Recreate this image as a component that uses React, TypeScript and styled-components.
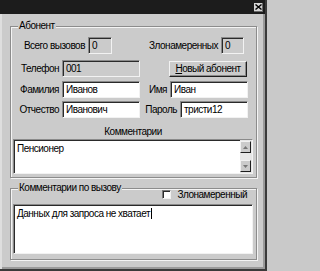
import React from 'react';
import styled, { createGlobalStyle } from 'styled-components';

const GlobalStyle = createGlobalStyle`
  html, body {
    margin: 0;
    padding: 0;
    background: #c9c9c9;
  }
  body {
    font-family: "Liberation Sans", Arial, sans-serif;
    font-size: 10px;
    letter-spacing: -0.5px;
    color: #000;
  }
`;

const App: React.FC = () => {
  return (
    <>
      <GlobalStyle />
      <StyledWindow>
        <StyledTitleBar>
          <StyledClose>
            <svg width="7" height="6" viewBox="0 0 7 6">
              <path d="M0.5 0.5 L6.5 5.5 M6.5 0.5 L0.5 5.5" stroke="#000" strokeWidth="1.4" />
            </svg>
          </StyledClose>
        </StyledTitleBar>
        <StyledBody>
          <StyledGroup $h={158}>
            <StyledLegend>Абонент</StyledLegend>
            <StyledRow $top={5}>
              <StyledLabel $w={75}>Всего вызовов</StyledLabel>
              <StyledField $w={24} $disabled>0</StyledField>
              <StyledLabel $w={109}>Злонамеренных</StyledLabel>
              <StyledField $w={23} $disabled>0</StyledField>
            </StyledRow>
            <StyledRow $top={6}>
              <StyledLabel $w={49}>Телефон</StyledLabel>
              <StyledField $w={78} $disabled>001</StyledField>
              <StyledButton>
                <u>Н</u>овый абонент
              </StyledButton>
            </StyledRow>
            <StyledRow $top={4}>
              <StyledLabel $w={49}>Фамилия</StyledLabel>
              <StyledField $w={78}>Иванов</StyledField>
              <StyledLabel $w={30}>Имя</StyledLabel>
              <StyledField $w={78}>Иван</StyledField>
            </StyledRow>
            <StyledRow $top={3}>
              <StyledLabel $w={49}>Отчество</StyledLabel>
              <StyledField $w={78}>Иванович</StyledField>
              <StyledLabel $w={40}>Пароль</StyledLabel>
              <StyledField $w={68}>тристи12</StyledField>
            </StyledRow>
            <StyledCaption>Комментарии</StyledCaption>
            <StyledMemo $h={35}>
              <StyledMemoText>Пенсионер</StyledMemoText>
              <StyledScrollBar>
                <StyledArrow>
                  <svg width="5" height="3" viewBox="0 0 5 3">
                    <path d="M0 3 L2.5 0 L5 3 Z" fill="#777" />
                  </svg>
                </StyledArrow>
                <StyledArrow>
                  <svg width="5" height="3" viewBox="0 0 5 3">
                    <path d="M0 0 L2.5 3 L5 0 Z" fill="#777" />
                  </svg>
                </StyledArrow>
              </StyledScrollBar>
            </StyledMemo>
          </StyledGroup>
          <StyledGroup $h={78} $mt={4}>
            <StyledLegend>Комментарии по вызову</StyledLegend>
            <StyledCheckRow>
              <StyledCheckBox />
              Злонамеренный
            </StyledCheckRow>
            <StyledMemo $h={50}>
              <StyledMemoText>
                Данных для запроса не хватает<StyledCaret />
              </StyledMemoText>
            </StyledMemo>
          </StyledGroup>
        </StyledBody>
      </StyledWindow>
    </>
  );
};

const StyledWindow = styled.div`
  width: 267px;
  height: 271px;
  box-sizing: border-box;
  display: flex;
  flex-direction: column;
  background: #cbcbcb;
  border-right: 2px solid #3a3a3a;
  border-bottom: 2px solid #3a3a3a;
  box-shadow: inset -2px -2px 0 #9a9a9a;
`;

const StyledTitleBar = styled.div`
  height: 14px;
  flex: none;
  display: flex;
  justify-content: flex-end;
  align-items: center;
  padding-right: 2px;
  background: #1c1c1c;
`;

const StyledClose = styled.div`
  box-sizing: border-box;
  width: 9px;
  height: 9px;
  display: flex;
  align-items: center;
  justify-content: center;
  background: #d6d6d6;
  border-right: 1px solid #6a6a6a;
  border-bottom: 1px solid #6a6a6a;
`;

const StyledBody = styled.div`
  flex: 1;
  padding: 6px 0 0 10px;
  border-left: 2px solid #dedede;
`;

const StyledGroup = styled.fieldset<{ $h: number; $mt?: number }>`
  box-sizing: border-box;
  width: 247px;
  height: ${(p) => p.$h}px;
  margin: ${(p) => p.$mt ?? 0}px 0 0 -2px;
  padding: 0 3px 0 2px;
  border: 1px solid #8c8c8c;
  box-shadow: 1px 1px 0 #f4f4f4, inset 1px 1px 0 #f4f4f4;
  min-width: 0;
`;

const StyledLegend = styled.legend`
  padding: 0 1px;
  margin-left: 5px;
  line-height: 12px;
  background: #cbcbcb;
`;

const StyledRow = styled.div<{ $top: number }>`
  display: flex;
  align-items: center;
  height: 17px;
  margin-top: ${(p) => p.$top}px;
`;

const StyledLabel = styled.div<{ $w: number }>`
  width: ${(p) => p.$w}px;
  padding-right: 3px;
  box-sizing: border-box;
  text-align: right;
  white-space: nowrap;
`;

const StyledField = styled.div<{ $w: number; $disabled?: boolean }>`
  box-sizing: border-box;
  width: ${(p) => p.$w}px;
  height: 17px;
  padding: 1px 0 0 3px;
  line-height: 13px;
  background: ${(p) => (p.$disabled ? '#cbcbcb' : '#fff')};
  border-top: 1px solid #8a8a8a;
  border-left: 1px solid #8a8a8a;
  border-right: 1px solid #f2f2f2;
  border-bottom: 1px solid #f2f2f2;
  box-shadow: inset 1px 1px 0 #2a2a2a;
  white-space: nowrap;
`;

const StyledButton = styled.div`
  box-sizing: border-box;
  width: 78px;
  height: 16px;
  margin-left: 29px;
  display: flex;
  align-items: center;
  justify-content: center;
  background: #cbcbcb;
  border-top: 1px solid #f2f2f2;
  border-left: 1px solid #f2f2f2;
  border-right: 1px solid #1e1e1e;
  border-bottom: 1px solid #1e1e1e;
  box-shadow: inset -1px -1px 0 #8a8a8a;
  white-space: nowrap;
`;

const StyledCaption = styled.div`
  margin-top: 8px;
  text-align: center;
  line-height: 12px;
`;

const StyledMemo = styled.div<{ $h: number }>`
  box-sizing: border-box;
  display: flex;
  height: ${(p) => p.$h}px;
  margin-top: 1px;
  background: #fff;
  border-top: 1px solid #8a8a8a;
  border-left: 1px solid #8a8a8a;
  border-right: 1px solid #f2f2f2;
  border-bottom: 1px solid #f2f2f2;
  box-shadow: inset 1px 1px 0 #2a2a2a;
`;

const StyledMemoText = styled.div`
  flex: 1;
  padding: 2px 0 0 3px;
  line-height: 13px;
  white-space: nowrap;
`;

const StyledScrollBar = styled.div`
  width: 11px;
  display: flex;
  flex-direction: column;
  justify-content: space-between;
  padding: 1px 1px 1px 0;
  background: #e6e6e6;
`;

const StyledArrow = styled.div`
  box-sizing: border-box;
  height: 12px;
  display: flex;
  align-items: center;
  justify-content: center;
  background: #cbcbcb;
  border-top: 1px solid #f2f2f2;
  border-left: 1px solid #f2f2f2;
  border-right: 1px solid #1e1e1e;
  border-bottom: 1px solid #1e1e1e;
`;

const StyledCheckRow = styled.div`
  display: flex;
  align-items: center;
  justify-content: flex-end;
  gap: 6px;
  height: 13px;
  margin-top: -6px;
  margin-bottom: 3px;
  padding-right: 6px;
`;

const StyledCheckBox = styled.div`
  box-sizing: border-box;
  width: 9px;
  height: 9px;
  background: #fff;
  border-top: 1px solid #7a7a7a;
  border-left: 1px solid #7a7a7a;
  border-right: 1px solid #f2f2f2;
  border-bottom: 1px solid #f2f2f2;
  box-shadow: inset 1px 1px 0 #2a2a2a;
`;

const StyledCaret = styled.span`
  display: inline-block;
  width: 1px;
  height: 11px;
  margin-left: 1px;
  vertical-align: -2px;
  background: #000;
`;

export default App;
